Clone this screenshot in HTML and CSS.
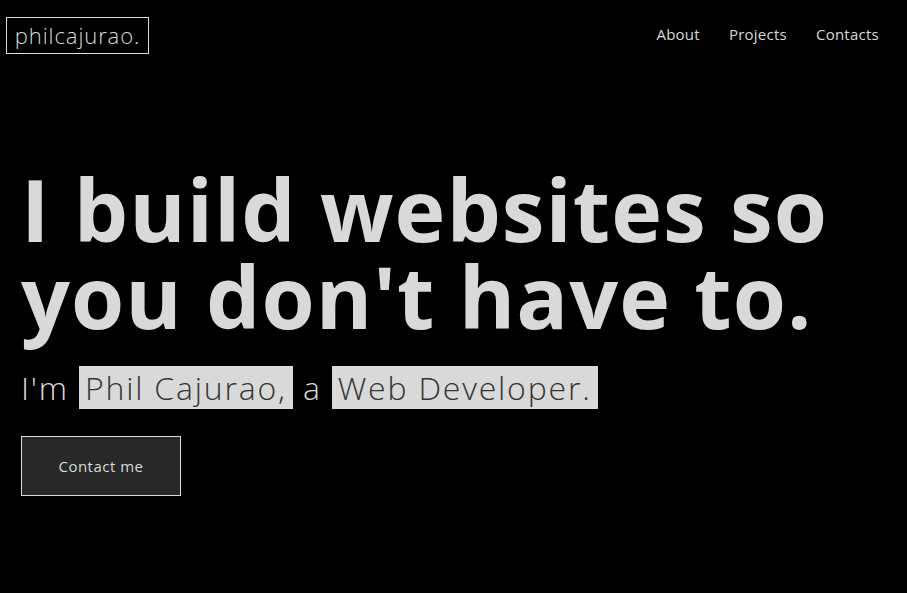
FILE: index.html
```html
<!DOCTYPE html>
<html lang="en">
<head>
<meta charset="utf-8">
<title>Phil Cajurao</title>
<link rel="stylesheet" href="styles.css">
</head>
<body>
<header class="site-header">
  <a class="logo" href="#">philcajurao.</a>
  <nav class="nav">
    <a href="#about">About</a>
    <a href="#projects">Projects</a>
    <a href="#contacts">Contacts</a>
  </nav>
</header>
<main class="hero">
  <h1 class="hero-title">I build websites so<br>you don't have to.</h1>
  <p class="hero-sub">I'm <span class="hl">Phil Cajurao,</span> a <span class="hl">Web Developer.</span></p>
  <a class="btn" href="#contacts">Contact me</a>
</main>
</body>
</html>
```
FILE: styles.css
```css
* { box-sizing: border-box; }
html, body { margin: 0; background: #000; }
body {
  color: #d9d9d9;
  font-family: "Open Sans", "DejaVu Sans", sans-serif;
}
a { color: inherit; text-decoration: none; }

.site-header {
  display: flex;
  justify-content: space-between;
  align-items: center;
  padding: 17px 28px 0 6px;
  height: 54px;
}
.logo {
  display: block;
  height: 37px;
  width: 143px;
  border: 1px solid #dcdcdc;
  font-size: 22px;
  font-weight: 300;
  line-height: 34px;
  text-align: center;
  letter-spacing: 0.9px;
}
.nav {
  display: flex;
  gap: 29px;
  font-size: 15px;
  letter-spacing: 0.25px;
  margin-top: -4px;
}

.hero { padding-left: 21px; }
.hero-title {
  margin: 111px 0 0;
  font-size: 86px;
  line-height: 87px;
  font-weight: 750;
  letter-spacing: 1px;
  white-space: nowrap;
}
.hero-sub {
  margin: 27px 0 0;
  font-size: 32px;
  font-weight: 330;
  line-height: 44px;
  height: 44px;
  letter-spacing: 1.8px;
  white-space: nowrap;
}
.hl {
  background: #d9d9d9;
  color: #353535;
  padding: 0 6px;
}
.btn {
  display: flex;
  align-items: center;
  justify-content: center;
  margin-top: 26px;
  width: 160px;
  height: 60px;
  background: #282828;
  border: 1px solid #dcdcdc;
  font-size: 15px;
  letter-spacing: 0.5px;
}
```
